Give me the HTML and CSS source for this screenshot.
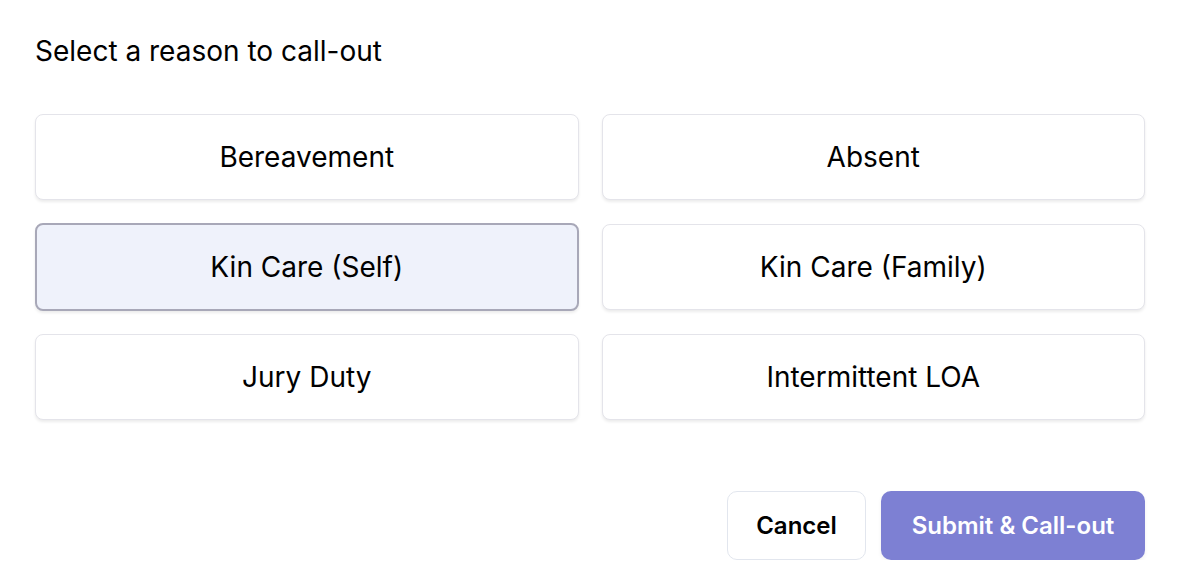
FILE: index.html
```html
<!DOCTYPE html>
<html>
<head>
<meta charset="utf-8">
<link rel="stylesheet" href="styles.css">
</head>
<body>
<div class="page">
  <h1 class="title">Select a reason to call-out</h1>
  <div class="grid">
    <button class="card">Bereavement</button>
    <button class="card">Absent</button>
    <button class="card selected">Kin Care (Self)</button>
    <button class="card">Kin Care (Family)</button>
    <button class="card">Jury Duty</button>
    <button class="card">Intermittent LOA</button>
  </div>
  <div class="actions">
    <button class="btn cancel">Cancel</button>
    <button class="btn submit">Submit &amp; Call-out</button>
  </div>
</div>
</body>
</html>
```
FILE: styles.css
```css
html, body {
  margin: 0;
  padding: 0;
  background: #ffffff;
}
.page {
  font-family: Inter, "Noto Sans", sans-serif;
  color: #000;
  padding: 31px 37px 0 35px;
}
.title {
  margin: 0;
  font-size: 28px;
  font-weight: 400;
  line-height: 40px;
}
.grid {
  margin-top: 43px;
  display: grid;
  grid-template-columns: 1fr 1fr;
  column-gap: 23px;
  row-gap: 24px;
}
.card {
  box-sizing: border-box;
  height: 86px;
  background: #fff;
  border: 1.5px solid #e4e4ea;
  border-radius: 8px;
  box-shadow: 0 2px 3px rgba(0, 0, 0, 0.08);
  font-family: Inter, "Noto Sans", sans-serif;
  font-size: 28px;
  color: #000;
  padding: 0;
}
.card.selected {
  background: #eff2fb;
  border: 2px solid #a8a8b8;
  margin: -1px 0;
  height: 88px;
}
.actions {
  margin-top: 71px;
  display: flex;
  justify-content: flex-end;
  gap: 15px;
}
.btn {
  box-sizing: border-box;
  height: 69px;
  border-radius: 10px;
  font-family: Inter, "Noto Sans", sans-serif;
  font-size: 24px;
  font-weight: 600;
  padding: 0;
}
.cancel {
  width: 139px;
  background: #fff;
  border: 1.5px solid #e2e6ee;
  color: #000;
}
.submit {
  width: 264px;
  background: #7d80d3;
  border: none;
  color: #fff;
  box-shadow: 0 2px 4px rgba(0, 0, 0, 0.06);
}
```
